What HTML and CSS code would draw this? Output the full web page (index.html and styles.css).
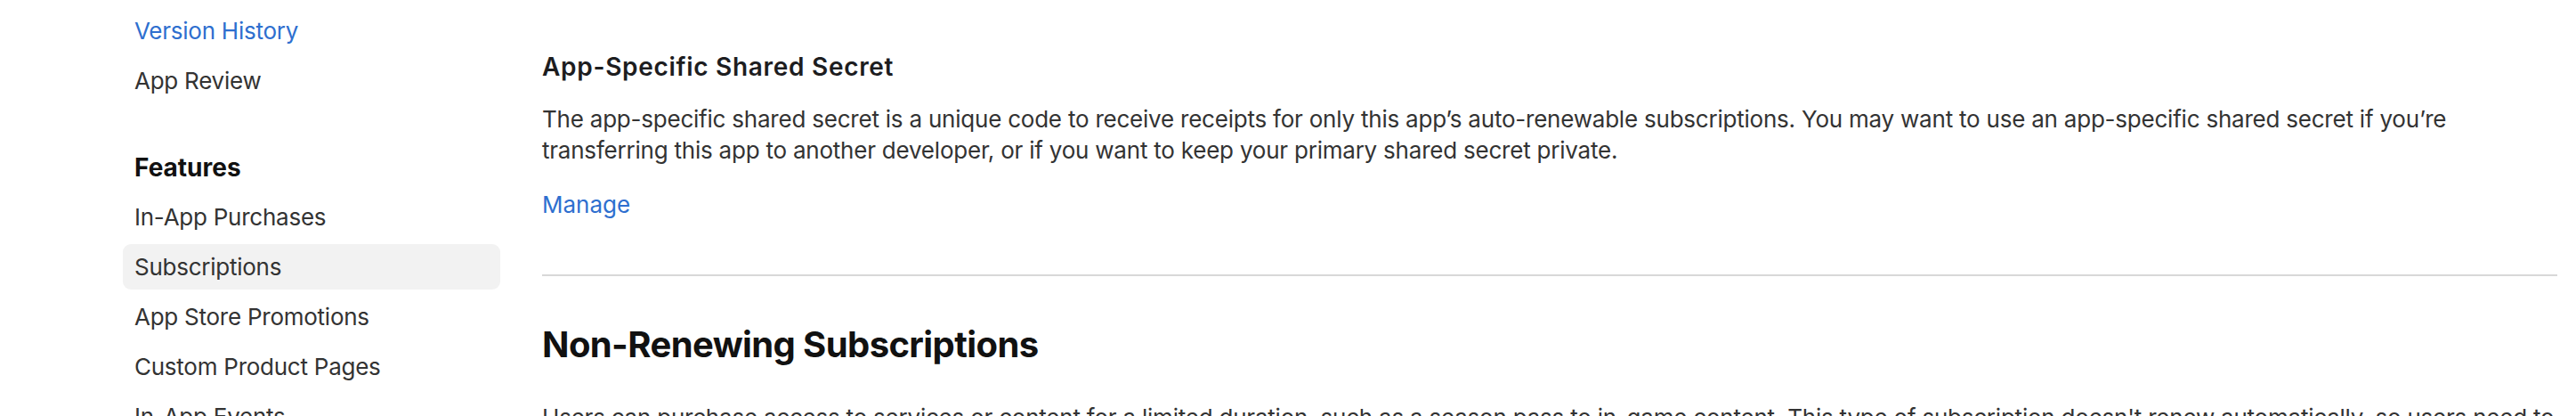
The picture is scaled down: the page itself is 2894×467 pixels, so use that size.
FILE: index.html
```html
<!DOCTYPE html>
<html lang="en">
<head>
    <meta charset="UTF-8">
    <meta name="viewport" content="width=device-width, initial-scale=1.0">
    <title>Subscriptions</title>
    <link rel="stylesheet" href="styles.css">
</head>
<body>

<div class="page">
    <nav class="sidebar">
        <ul class="nav-group">
            <li><a class="nav-item link" href="#">Version History</a></li>
            <li><a class="nav-item" href="#">App Review</a></li>
        </ul>

        <h4 class="nav-title">Features</h4>
        <ul class="nav-group">
            <li><a class="nav-item" href="#">In-App Purchases</a></li>
            <li><a class="nav-item active" href="#">Subscriptions</a></li>
            <li><a class="nav-item" href="#">App Store Promotions</a></li>
            <li><a class="nav-item" href="#">Custom Product Pages</a></li>
            <li><a class="nav-item" href="#">In-App Events</a></li>
        </ul>
    </nav>

    <main class="content">
        <section class="block">
            <h3 class="block-title">App-Specific Shared Secret</h3>
            <p class="block-text">The app-specific shared secret is a unique code to receive receipts for only this app’s auto-renewable subscriptions. You may want to use an app-specific shared secret if you’re transferring this app to another developer, or if you want to keep your primary shared secret private.</p>
            <a class="block-link" href="#">Manage</a>
        </section>

        <hr class="divider">

        <section class="block">
            <h2 class="section-title">Non-Renewing Subscriptions</h2>
            <p class="block-text">Users can purchase access to services or content for a limited duration, such as a season pass to in-game content. This type of subscription doesn't renew automatically, so users need to renew each time.</p>
        </section>
    </main>
</div>

</body>
</html>
```

FILE: styles.css
```css
body {
    margin: 0;
    font-family: Inter, "Noto Sans", sans-serif;
    color: #333;
    background: #fff;
    overflow: hidden;
}
.page {
    display: flex;
    height: 467px;
}
.sidebar {
    width: 424px;
    padding: 9px 0 0 138px;
    flex-shrink: 0;
}
.nav-group {
    list-style: none;
    margin: 0;
    padding: 0;
    display: flex;
    flex-direction: column;
    gap: 5px;
}
.nav-item {
    display: block;
    padding: 10px 13px;
    font-size: 26px;
    line-height: 31px;
    letter-spacing: -0.25px;
    color: #333;
    text-decoration: none;
    border-radius: 9px;
}
.nav-item.link {
    color: #2e6fcf;
}
.nav-item.active {
    background: #f2f2f2;
}
.nav-title {
    margin: 55px 0 13px 13px;
    font-size: 28px;
    line-height: 34px;
    font-weight: 700;
    color: #111;
}
.content {
    flex: 1;
    padding: 58px 21px 0 47px;
}
.block-title {
    margin: 0 0 24px;
    font-size: 28px;
    line-height: 34px;
    font-weight: 600;
    letter-spacing: 0.7px;
    color: #1d1d1f;
}
.block-text {
    margin: 0 0 26px;
    font-size: 26px;
    line-height: 35px;
    letter-spacing: -0.22px;
    color: #333;
}
.block-link {
    display: block;
    font-size: 26px;
    line-height: 35px;
    color: #2e6fcf;
    text-decoration: none;
}
.divider {
    margin: 61px 0 53px;
    border: 0;
    height: 2px;
    background: #d8d8d8;
}
.section-title {
    margin: 0 0 40px;
    font-size: 40px;
    line-height: 48px;
    font-weight: 700;
    letter-spacing: -0.6px;
    color: #111;
}
```
